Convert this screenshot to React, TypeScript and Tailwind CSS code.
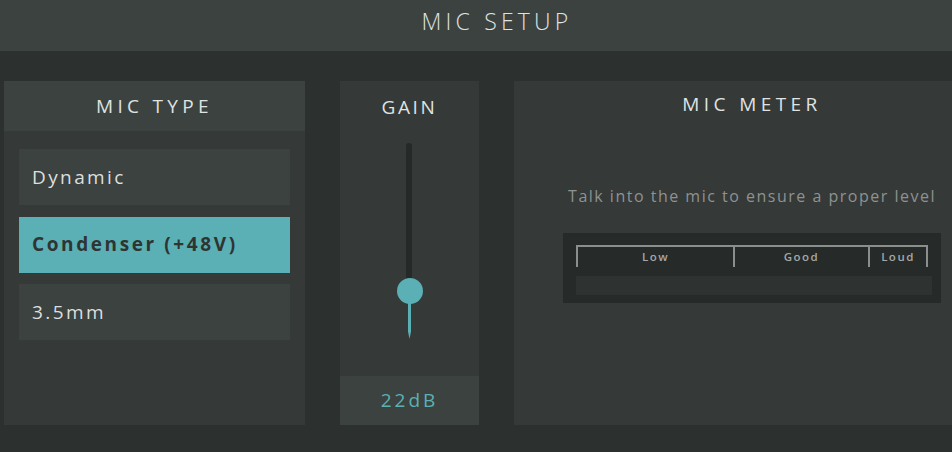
const font = { fontFamily: '"Open Sans", "DejaVu Sans", sans-serif' };

const options = [
  { label: "Dynamic", active: false },
  { label: "Condenser (+48V)", active: true },
  { label: "3.5mm", active: false },
];

export default function App() {
  return (
    <div className="h-[452px] w-[952px] overflow-hidden bg-[#2c302f]" style={font}>
      <div className="flex h-[452px] w-[994px] flex-col">
        <header className="flex h-[51px] shrink-0 items-center justify-center bg-[#3c4240] pb-[8px]">
          <h1 className="text-[23px] font-light tracking-[4.2px] text-[#dfe3e2]">MIC SETUP</h1>
        </header>

        <div className="flex flex-1 gap-[35px] px-[4px] pt-[30px] pb-[27px]">
          {/* mic type */}
          <section className="flex w-[301px] flex-col bg-[#353938]">
            <div className="flex h-[50px] items-center justify-center bg-[#3c4240]">
              <h2 className="text-[19px] tracking-[4.3px] text-[#dfe3e2]">MIC TYPE</h2>
            </div>
            <div className="flex flex-col gap-[11.5px] px-[15px] pt-[18px]">
              {options.map((o) => (
                <div
                  key={o.label}
                  className={
                    o.active
                      ? "flex h-[56px] items-center bg-[#5ab0b5] px-[13px] text-[19px] font-bold tracking-[2.6px] text-[#2f3433]"
                      : "flex h-[56px] items-center bg-[#3c4240] px-[13px] text-[19px] tracking-[2.4px] text-[#dcdfde]"
                  }
                >
                  {o.label}
                </div>
              ))}
            </div>
          </section>

          {/* gain */}
          <section className="flex w-[139px] flex-col bg-[#353938]">
            <div className="flex h-[52px] items-center justify-center">
              <h2 className="text-[19px] tracking-[2.6px] text-[#dfe3e2]">GAIN</h2>
            </div>
            <div className="relative flex-1">
              <div className="absolute left-[66px] top-[10px] h-[140px] w-[6px] rounded-full bg-[#252928]" />
              <div
                className="absolute left-[68px] top-[168px] h-[38px] w-[3px] bg-[#5ab0b5]"
                style={{ clipPath: "polygon(0 0, 100% 0, 100% 80%, 50% 100%, 0 80%)" }}
              />
              <div className="absolute left-[57px] top-[145px] h-[26px] w-[26px] rounded-full bg-[#5ab0b5]" />
            </div>
            <div className="flex h-[49px] items-center justify-center bg-[#3c4240] text-[19px] tracking-[3px] text-[#5ab0b5]">
              22dB
            </div>
          </section>

          {/* mic meter */}
          <section className="flex w-[476px] flex-col items-center bg-[#353938]">
            <h2 className="mt-[9px] text-[19px] tracking-[4.4px] text-[#dfe3e2]">MIC METER</h2>
            <p className="mt-[65px] text-[16px] tracking-[1.5px] text-[#8e9291]">
              Talk into the mic to ensure a proper level
            </p>
            <div className="mt-[25px] w-[378px] bg-[#262a29] px-[13px] pt-[12px] pb-[8px]">
              <div className="flex h-[22px] w-[352px] border-x-2 border-t-2 border-[#8a8e8d] text-[11.5px] font-semibold tracking-[1.5px] text-[#a4a8a7]">
                <div className="flex w-[157px] items-center justify-center border-r-2 border-[#8a8e8d]">Low</div>
                <div className="flex w-[135px] items-center justify-center border-r-2 border-[#8a8e8d]">Good</div>
                <div className="flex flex-1 items-center justify-center">Loud</div>
              </div>
              <div className="mt-[9px] h-[19px] w-[356px] bg-[#2e3231]" />
            </div>
          </section>
        </div>
      </div>
    </div>
  );
}
